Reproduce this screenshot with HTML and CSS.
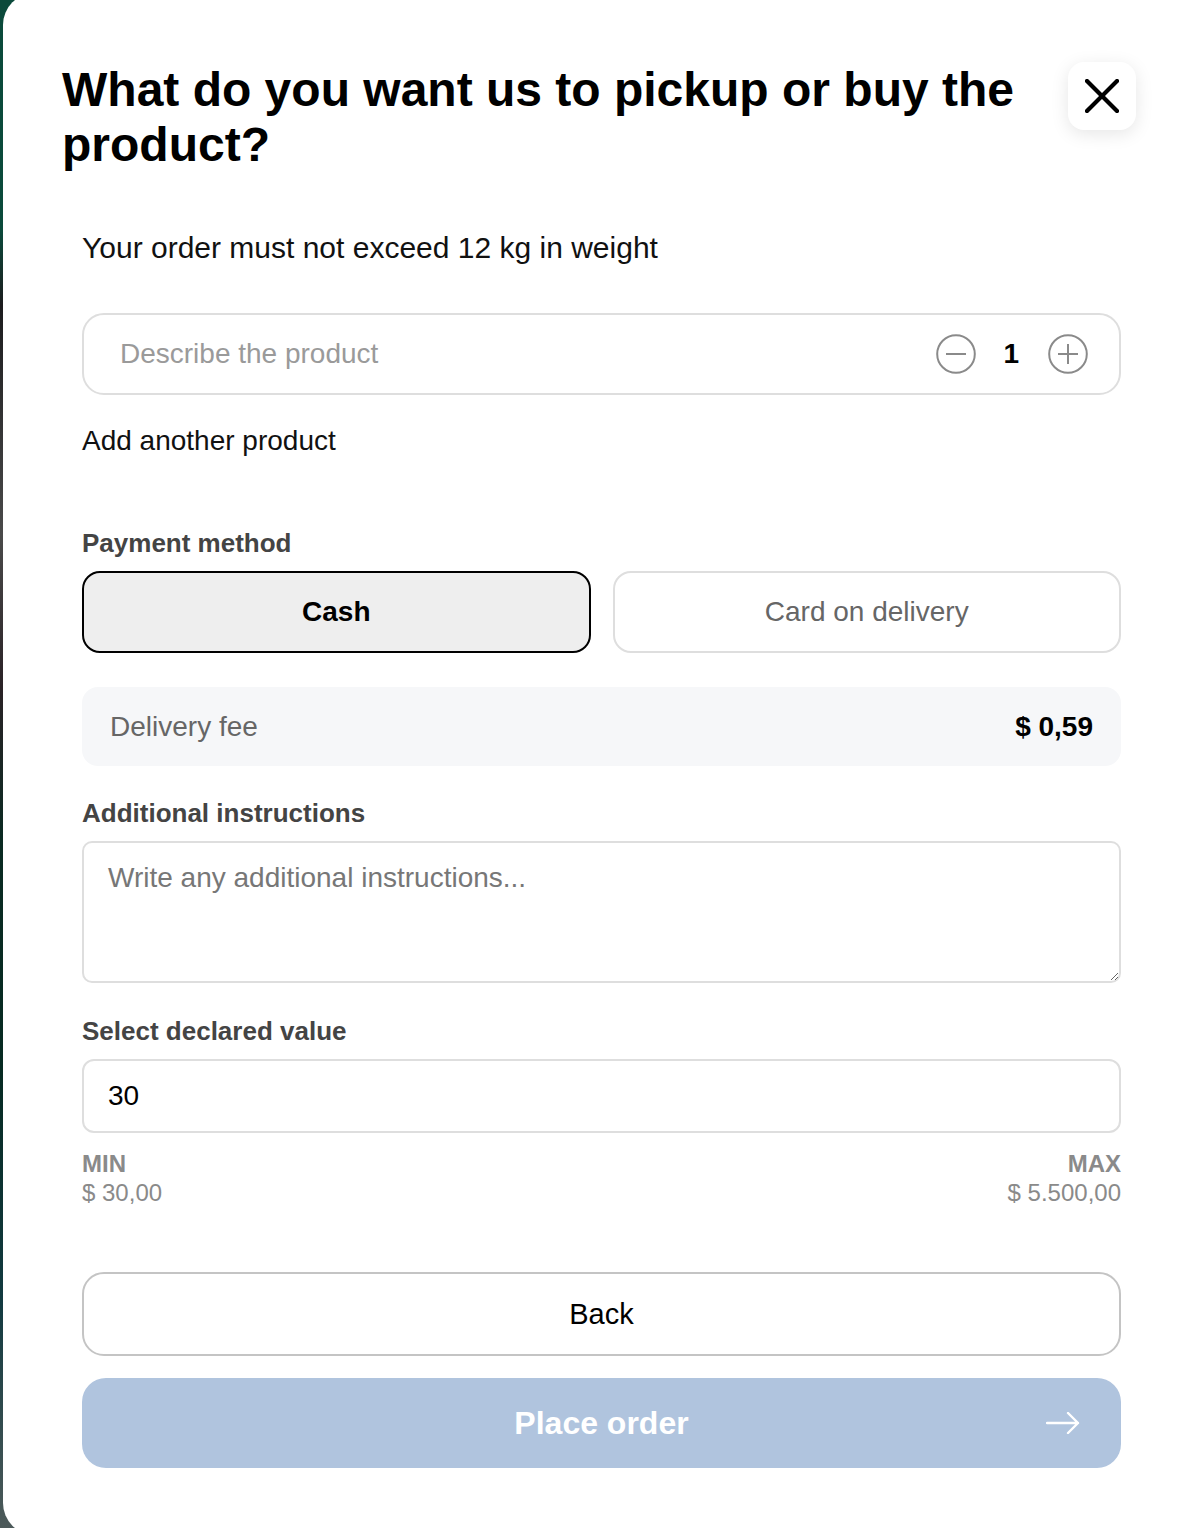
FILE: index.html
```html
<!DOCTYPE html>
<html lang="en">
<head>
<meta charset="utf-8">
<title>Pickup or buy</title>
<link rel="stylesheet" href="styles.css">
</head>
<body>
<div class="modal">
  <div class="header">
    <h1 class="title">What do you want us to pickup or buy the product?</h1>
    <button class="close" aria-label="Close">
      <svg width="34" height="34" viewBox="0 0 34 34"><path d="M2 2 L32 32 M32 2 L2 32" stroke="#000" stroke-width="4.2" stroke-linecap="square" fill="none"/></svg>
    </button>
  </div>
  <div class="content">
    <p class="note">Your order must not exceed 12 kg in weight</p>
    <div class="product-field">
      <span class="placeholder">Describe the product</span>
      <div class="stepper">
        <svg class="step-icon" width="40" height="40" viewBox="0 0 40 40"><circle cx="20" cy="20" r="18.8" stroke="#8a8a8a" stroke-width="2" fill="none"/><path d="M10 20 H30" stroke="#8a8a8a" stroke-width="2"/></svg>
        <span class="qty">1</span>
        <svg class="step-icon" width="40" height="40" viewBox="0 0 40 40"><circle cx="20" cy="20" r="18.8" stroke="#8a8a8a" stroke-width="2" fill="none"/><path d="M10 20 H30 M20 10 V30" stroke="#8a8a8a" stroke-width="2"/></svg>
      </div>
    </div>
    <p class="add-link">Add another product</p>

    <div class="group group-payment">
      <div class="label">Payment method</div>
      <div class="pay-options">
        <button class="pay-option active">Cash</button>
        <button class="pay-option">Card on delivery</button>
      </div>
    </div>

    <div class="fee">
      <span class="fee-label">Delivery fee</span>
      <span class="fee-value">$ 0,59</span>
    </div>

    <div class="group group-instructions">
      <div class="label">Additional instructions</div>
      <textarea class="textarea" placeholder="Write any additional instructions..."></textarea>
    </div>

    <div class="group group-value">
      <div class="label">Select declared value</div>
      <input class="value-input" type="text" value="30">
    </div>

    <div class="range">
      <div class="range-col">
        <span class="range-title">MIN</span>
        <span class="range-amount">$ 30,00</span>
      </div>
      <div class="range-col range-right">
        <span class="range-title">MAX</span>
        <span class="range-amount">$ 5.500,00</span>
      </div>
    </div>

    <button class="btn-back">Back</button>
    <button class="btn-place">
      <span></span>
      <span class="place-text">Place order</span>
      <svg class="place-arrow" width="34" height="22" viewBox="0 0 34 22"><path d="M1 11 H32 M22 1 L32 11 L22 21" stroke="#fff" stroke-width="2.4" fill="none" stroke-linecap="round" stroke-linejoin="round"/></svg>
    </button>
  </div>
</div>
</body>
</html>
```

FILE: styles.css
```css
* { box-sizing: border-box; }

html, body {
  margin: 0;
  padding: 0;
  height: 1528px;
  overflow: hidden;
}

body {
  background: linear-gradient(180deg, #0b4a3b 0%, #0b4a3b 15%, #1c1c1e 20%, #4a4a4a 35%, #2a2226 45%, #0a2a22 55%, #062a22 70%, #123a40 85%, #4d5a5a 100%);
  font-family: "Liberation Sans", Arial, Helvetica, sans-serif;
  color: #111;
}

.modal {
  margin: -7px 0 0 3px;
  width: 1199px;
  height: 1542px;
  background: #fff;
  border-radius: 32px 0 0 32px;
  padding: 69px 0 0 59px;
}

.header {
  width: 1074px;
  display: flex;
  align-items: flex-start;
  gap: 30px;
}

.title {
  flex: 1;
  margin: 0;
  font-size: 48px;
  line-height: 55px;
  font-weight: 700;
  color: #000;
}

.close {
  flex: none;
  width: 68px;
  height: 68px;
  border: none;
  border-radius: 16px;
  background: #fff;
  box-shadow: 0 4px 18px rgba(0, 0, 0, 0.10);
  display: flex;
  align-items: center;
  justify-content: center;
  padding: 0;
}

.content {
  width: 1039px;
  margin-left: 20px;
  display: flex;
  flex-direction: column;
}

.note {
  margin: 58px 0 0;
  font-size: 30px;
  line-height: 36px;
  color: #111;
}

.product-field {
  margin-top: 47px;
  height: 82px;
  border: 2px solid #dedede;
  border-radius: 22px;
  display: flex;
  align-items: center;
  justify-content: space-between;
  padding: 0 31px 0 36px;
}

.placeholder {
  font-size: 28px;
  color: #9a9a9a;
}

.stepper {
  display: flex;
  align-items: center;
}

.step-icon { display: block; }

.qty {
  font-size: 28px;
  font-weight: 700;
  color: #000;
  margin: 0 29px 0 27px;
}

.add-link {
  margin: 28px 0 0;
  font-size: 28px;
  line-height: 36px;
  color: #111;
}

.group {
  display: flex;
  flex-direction: column;
  gap: 13px;
}

.group-payment { margin-top: 69px; }
.group-instructions { margin-top: 32px; }
.group-value { margin-top: 33px; }

.label {
  font-size: 26px;
  line-height: 30px;
  font-weight: 700;
  color: #444;
}

.pay-options {
  display: grid;
  grid-template-columns: 1fr 1fr;
  gap: 22px;
}

.pay-option {
  height: 82px;
  border: 2px solid #dedede;
  border-radius: 18px;
  background: #fff;
  font-family: inherit;
  font-size: 28px;
  color: #666;
  padding: 0;
}

.pay-option.active {
  background: #eeeeee;
  border-color: #000;
  color: #000;
  font-weight: 700;
}

.fee {
  margin-top: 34px;
  height: 79px;
  background: #f6f7f9;
  border-radius: 16px;
  display: flex;
  align-items: center;
  justify-content: space-between;
  padding: 0 28px;
}

.fee-label {
  font-size: 28px;
  color: #666;
}

.fee-value {
  font-size: 28px;
  font-weight: 700;
  color: #000;
}

.textarea {
  height: 142px;
  border: 2px solid #dedede;
  border-radius: 10px;
  padding: 19px 24px;
  font-family: inherit;
  font-size: 28px;
  line-height: 32px;
  color: #111;
  resize: vertical;
  outline: none;
}

.textarea::placeholder { color: #777; }

.value-input {
  height: 74px;
  border: 2px solid #dedede;
  border-radius: 12px;
  padding: 0 24px;
  font-family: inherit;
  font-size: 28px;
  color: #000;
  outline: none;
}

.range {
  margin-top: 16px;
  display: flex;
  justify-content: space-between;
}

.range-col {
  display: flex;
  flex-direction: column;
}

.range-right { align-items: flex-end; }

.range-title {
  font-size: 24px;
  line-height: 29px;
  font-weight: 700;
  color: #8a8a8a;
}

.range-amount {
  font-size: 24px;
  line-height: 29px;
  color: #8a8a8a;
}

.btn-back {
  margin-top: 65px;
  height: 84px;
  border: 2px solid #c4c4c4;
  border-radius: 22px;
  background: #fff;
  font-family: inherit;
  font-size: 29px;
  color: #000;
  padding: 0;
}

.btn-place {
  margin-top: 22px;
  height: 90px;
  border: none;
  border-radius: 24px;
  background: #b0c4de;
  font-family: inherit;
  display: grid;
  grid-template-columns: 1fr auto 1fr;
  align-items: center;
  padding: 0 41px;
}

.place-text {
  font-size: 32px;
  font-weight: 700;
  color: #fff;
}

.place-arrow {
  justify-self: end;
  display: block;
}
```
